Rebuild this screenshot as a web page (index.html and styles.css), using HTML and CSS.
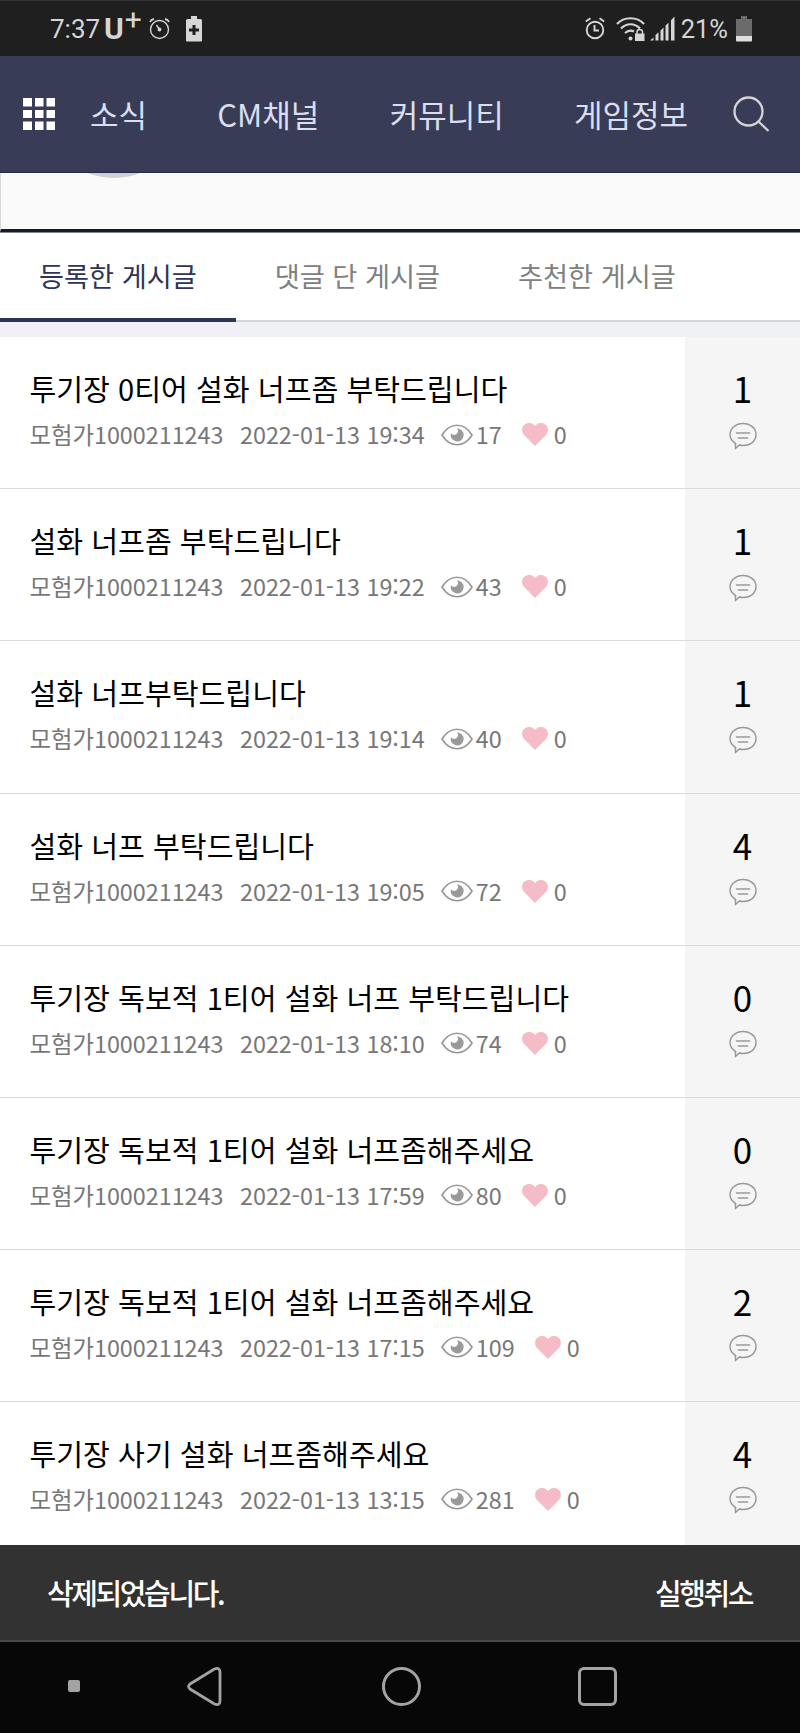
FILE: index.html
```
<!DOCTYPE html>
<html lang="ko">
<head>
  <meta charset="UTF-8" />
  <meta name="viewport" content="width=device-width, initial-scale=1.0" />
  <title>등록한 게시글</title>
  <link rel="stylesheet" href="styles.css">
</head>
<body>
  <svg class="symbols" aria-hidden="true">
    <symbol id="icon-eye" viewBox="0 0 32 22">
      <path d="M1 11C9-2 23-2 31 11C23 24 9 24 1 11Z" fill="none" stroke="#999" stroke-width="1.700"/>
      <path d="M16 4.500a6.500 6.500 0 1 1-6 4.500a3.400 3.400 0 0 0 5.200 1.200a3.500 3.500 0 0 0 .8-5.700Z" fill="#999"/>
    </symbol>
    <symbol id="icon-heart" viewBox="0 0 26 23">
      <path d="M13 23L2.100 12C-.7 9-.5 4.500 2 2C5-.8 9.500-.6 12 2L13 3.100L14 2C16.500-.6 21-.8 24 2C26.500 4.500 26.700 9 23.900 12Z" fill="#f5bbc6"/>
    </symbol>
    <symbol id="icon-comment" viewBox="0 0 28 28">
      <path d="M6.500 26.300V21.500C3 19.200 1 16.300 1 12.800C1 6.300 6.700 1.500 14 1.500S27 6.300 27 12.600C27 19 21.500 23.500 14.500 23.500C12.800 23.500 11.500 23.400 10.300 23C9.200 24.200 8 25.300 6.500 26.300Z" fill="none" stroke="#999" stroke-width="1.500"/>
      <path d="M7.500 11H20.500M9.500 16H18.500" stroke="#999" stroke-width="1.700" stroke-linecap="round"/>
    </symbol>
  </svg>

  <!-- 상태 표시줄 -->
  <div class="status-bar">
    <span class="time">7:37</span>
    <span class="carrier">U<span class="plus">+</span></span>
    <svg class="status-alarm" width="21" height="22" viewBox="0 0 21 22" fill="none" stroke="#d6d6d6" stroke-width="1.400">
      <circle cx="10.500" cy="11.500" r="9"/>
      <path d="M1 4Q2 1.500 5 1M16 1Q19 1.500 20 4" stroke-width="1.800"/>
      <path d="M7.500 7L10.500 11.500"/>
      <circle cx="10.500" cy="11.500" r="1.200" fill="#d6d6d6"/>
    </svg>
    <svg class="status-saver" width="16" height="26" viewBox="0 0 16 26">
      <path d="M5 0H11V3H14.500Q16 3 16 4.500V24.500Q16 25.500 15 25.500H1Q0 25.500 0 24.500V4.500Q0 3 1.500 3H5Z" fill="#d6d6d6"/>
      <path d="M6.500 9H9.500V12.500H13V15.500H9.500V19H6.500V15.500H3V12.500H6.500Z" fill="#1f1f1f"/>
    </svg>
    <div class="status-right">
      <svg width="20" height="23" viewBox="0 0 20 23" fill="none" stroke="#d6d6d6" stroke-width="1.900">
        <circle cx="10" cy="13" r="8.300"/>
        <path d="M9.500 8V13.500H14M.8 4.500L5.500 1.200M14.500 1.200L19.200 4.500"/>
      </svg>
      <svg class="status-wifi" width="29" height="26" viewBox="0 0 29 26" fill="none" stroke="#d6d6d6" stroke-width="2.200">
        <path d="M1 8C8 .3 21 .3 28 8M5 12.500C10.500 6.800 18.500 6.800 24 12.500M9 17C12 14.300 15 14 18 15.500"/>
        <circle cx="14.500" cy="22.500" r="2" fill="#d6d6d6" stroke="none"/>
        <rect x="19" y="17.500" width="9.500" height="7.500" fill="#d6d6d6" stroke="none"/>
        <path d="M21 18V16Q21 13.500 23.700 13.500T26.500 16V18" stroke-width="1.500"/>
      </svg>
      <svg class="status-signal" width="25" height="25" viewBox="0 0 25 25" fill="#d6d6d6">
        <path d="M0 24.500L3.500 21.500V24.500ZM5.500 19L8.500 16.300V24.500H5.500ZM10.500 14.500L13.500 11.600V24.500H10.500ZM15.500 9.500L18.500 6.700V24.500H15.500ZM21 4.200L24.500 .5V24.500H21Z"/>
      </svg>
      <span class="percent">21%</span>
      <svg class="status-battery" width="16" height="26" viewBox="0 0 16 26">
        <path d="M5 0H11V3H16V20H0V3H5Z" fill="#6b6b6b"/>
        <path d="M0 20H16V24.500Q16 25.500 15 25.500H1Q0 25.500 0 24.500Z" fill="#dedede"/>
      </svg>
    </div>
  </div>

  <!-- 상단 메뉴 -->
  <header class="header">
    <svg class="menu-grid" width="32" height="32" viewBox="0 0 32 32" fill="#fff">
      <path d="M0 0H9V8.500H0ZM12 0H20.500V8.500H12ZM23.500 0H32V8.500H23.500ZM0 12H9V20H0ZM12 12H20.500V20H12ZM23.500 12H32V20H23.500ZM0 23.500H9V32H0ZM12 23.500H20.500V32H12ZM23.500 23.500H32V32H23.500Z"/>
    </svg>
    <nav class="menu">
      <a>소식</a>
      <a>CM채널</a>
      <a>커뮤니티</a>
      <a>게임정보</a>
    </nav>
    <svg class="search" width="37" height="37" viewBox="0 0 37 37" fill="none" stroke="#d4d4d8" stroke-width="2.300">
      <circle cx="15.500" cy="15.500" r="14"/>
      <path d="M25.500 25.500L35.500 35"/>
    </svg>
  </header>

  <main class="content">
    <div class="profile"><div class="avatar"></div></div>
    <div class="tabs">
      <a class="tab active">등록한 게시글</a>
      <a class="tab">댓글 단 게시글</a>
      <a class="tab">추천한 게시글</a>
    </div>
    <div class="posts" id="posts"></div>
  </main>

  <div class="toast">
    <span>삭제되었습니다.</span>
    <span>실행취소</span>
  </div>

  <div class="nav-bar">
    <span class="nav-dot"></span>
    <svg class="nav-back" width="35" height="39" viewBox="0 0 35 39" fill="none" stroke="#a3a3a3" stroke-width="2.800">
      <path d="M3 17L27 2.200Q33 -.2 33 5V34Q33 39.200 27 36.800L3 22Q.2 19.500 3 17Z"/>
    </svg>
    <span class="nav-home"></span>
    <span class="nav-recent"></span>
  </div>

  <script>
    const author = "모험가1000211243";

    const posts = [
      { title: "투기장 0티어 설화 너프좀 부탁드립니다", time: "19:34", views: 17, replies: 1 },
      { title: "설화 너프좀 부탁드립니다", time: "19:22", views: 43, replies: 1 },
      { title: "설화 너프부탁드립니다", time: "19:14", views: 40, replies: 1 },
      { title: "설화 너프 부탁드립니다", time: "19:05", views: 72, replies: 4 },
      { title: "투기장 독보적 1티어 설화 너프 부탁드립니다", time: "18:10", views: 74, replies: 0 },
      { title: "투기장 독보적 1티어 설화 너프좀해주세요", time: "17:59", views: 80, replies: 0 },
      { title: "투기장 독보적 1티어 설화 너프좀해주세요", time: "17:15", views: 109, replies: 2 },
      { title: "투기장 사기 설화 너프좀해주세요", time: "13:15", views: 281, replies: 4 },
    ];

    document.getElementById("posts").innerHTML = posts.map(p => `
      <div class="post">
        <div class="post-body">
          <div class="post-title">${p.title}</div>
          <div class="post-meta">
            <span class="author">${author}</span>
            <span class="date">2022-01-13 ${p.time}</span>
            <svg class="eye"><use href="#icon-eye"/></svg>
            <span>${p.views}</span>
            <svg class="heart"><use href="#icon-heart"/></svg>
            <span>0</span>
          </div>
        </div>
        <div class="post-reply">
          <span class="count">${p.replies}</span>
          <svg class="comment"><use href="#icon-comment"/></svg>
        </div>
      </div>`).join("");
  </script>
</body>
</html>
```

FILE: styles.css
```
* { box-sizing: border-box; }
body {
  width: 800px;
  height: 1733px;
  margin: 0;
  display: flex;
  flex-direction: column;
  overflow: hidden;
  background: #fff;
  font-family: 'Noto Sans CJK KR', sans-serif;
}
svg { display: block; flex: none; }
.symbols { width: 0; height: 0; position: absolute; }

/* 상태 표시줄 */
.status-bar {
  flex: none;
  height: 56px;
  padding: 0 48px 0 50px;
  display: flex;
  align-items: center;
  background: #1f1f1f;
  border-top: 1px solid #333;
  color: #d6d6d6;
  font-family: Roboto, sans-serif;
  font-size: 26px;
}
.time { width: 54px; }
.carrier {
  width: 45px;
  display: flex;
  font-size: 30px;
  font-weight: 700;
}
.plus {
  margin: -9px 0 0 1px;
  font-size: 30px;
  font-weight: 400;
}
.status-saver { margin-left: 16px; }
.status-right {
  margin-left: auto;
  display: flex;
  align-items: center;
}
.status-wifi { margin-left: 11px; }
.status-signal { margin-left: 5px; }
.percent {
  margin-left: 6px;
  font-size: 25.5px;
}
.status-battery { margin-left: 8px; }

/* 상단 메뉴 */
.header {
  flex: none;
  height: 117px;
  padding: 0 30px 0 23px;
  display: flex;
  align-items: center;
  background: #383c56;
  border-bottom: 1px solid #262a4b;
}
.menu {
  margin-left: 35px;
  display: flex;
  gap: 70.3px;
  color: #dadff0;
  font-size: 31px;
  line-height: 46px;
  white-space: nowrap;
}
.search { margin-left: auto; }

.content {
  flex: none;
  height: 1372px;
  overflow: hidden;
}
.profile {
  height: 59px;
  overflow: hidden;
  background: #fafafa;
  border-left: 1px solid #d8d8d8;
  border-bottom: 3px solid #181b2b;
}
.avatar {
  width: 146px;
  height: 146px;
  margin: -141px 0 0 40px;
  border-radius: 50%;
  background: #cfcfd5;
}

/* 탭 */
.tabs {
  height: 90px;
  display: flex;
  border-top: 1px solid #85878f;
  border-bottom: 2px solid #d3d6d6;
}
.tab {
  height: 89px;
  padding: 0 39px;
  color: #808080;
  font-size: 27.2px;
  line-height: 84px;
  white-space: nowrap;
}
.tab.active {
  color: #2d3553;
  border-bottom: 4px solid #2d3553;
}

/* 게시글 목록 */
.posts {
  padding-top: 15.3px;
  background: linear-gradient(#eff1f6 15px, #fff 15px);
}
.post {
  height: 152.1px;
  display: flex;
  border-bottom: 1px solid #dadada;
}
.post-body {
  flex: 1;
  padding: 29px 0 0 29.5px;
}
.post-title {
  color: #000;
  font-size: 29.15px;
  line-height: 44px;
}
.post-meta {
  display: flex;
  align-items: center;
  color: #777;
  font-size: 23.35px;
  line-height: 49px;
}
.date { margin-left: 16.5px; }
.eye {
  width: 32px;
  height: 22px;
  margin: 0 3px 0 16px;
}
.heart {
  width: 26px;
  height: 23px;
  margin: 0 6px 0 20px;
}
.post-reply {
  width: 115px;
  padding-top: 29px;
  display: flex;
  flex-direction: column;
  align-items: center;
  background: #f5f5f5;
}
.count {
  color: #000;
  font-size: 35px;
  line-height: 43px;
}
.comment {
  width: 28px;
  height: 28px;
  margin-top: 12.5px;
}

/* 하단 알림 */
.toast {
  flex: none;
  height: 97px;
  padding: 0 48px 1px 47px;
  display: flex;
  align-items: center;
  justify-content: space-between;
  background: #323232;
  border-bottom: 2px solid #484848;
  color: #fff;
  font-size: 29px;
  font-weight: 500;
  letter-spacing: -2.4px;
}

/* 내비게이션 바 */
.nav-bar {
  flex: 1;
  padding: 0 0 3px 68px;
  display: flex;
  align-items: center;
  background: #070707;
}
.nav-dot {
  width: 12px;
  height: 12px;
  border-radius: 2px;
  background: #a3a3a3;
}
.nav-back { margin-left: 107px; }
.nav-home {
  width: 39px;
  height: 39px;
  margin-left: 160px;
  border: 3px solid #a3a3a3;
  border-radius: 50%;
}
.nav-recent {
  width: 39px;
  height: 39px;
  margin-left: 157px;
  border: 3px solid #a3a3a3;
  border-radius: 6px;
}
```
